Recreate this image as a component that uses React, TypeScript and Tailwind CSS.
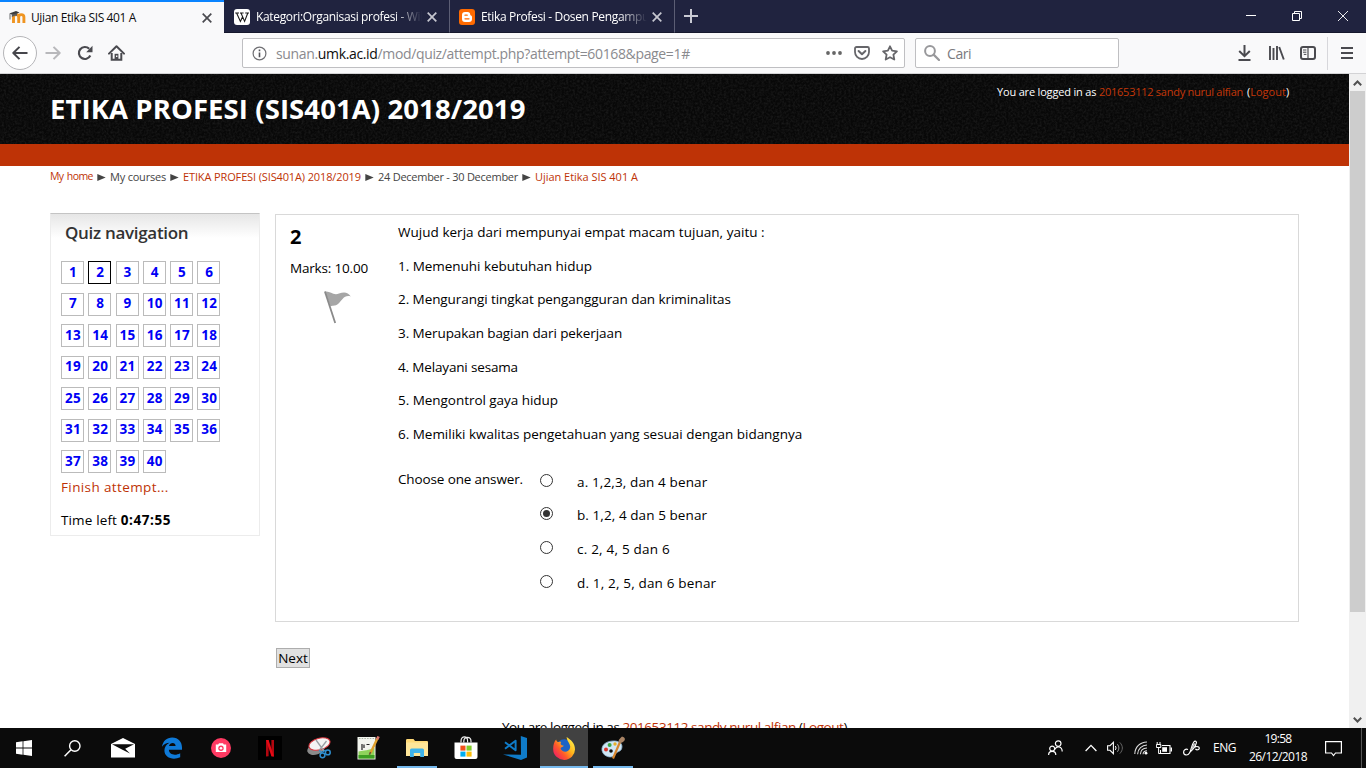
import React from "react";

const LINK = "text-[#be3306]";

function Tabs() {
  return (
    <div className="flex h-[33px] shrink-0 bg-[#20233f] font-['Open_Sans',sans-serif] text-[12px] text-white">
      <div className="flex h-[33px] w-[224px] items-center border-t-2 border-[#0a84ff] bg-[#f9f9fa] pl-[9px] text-[#0c0c0d]">
        <svg width="17" height="16" viewBox="0 0 17 16" className="shrink-0">
          <path d="M4.5 13V7C4.5 3.8 9.7 3.8 9.7 7V13M9.7 7C9.7 3.8 14.9 3.8 14.9 7V13" fill="none" stroke="#ef9421" strokeWidth="2.9" />
          <path d="M0.3 3.4L7 1L10.5 2.6L4.5 5.2Z" fill="#3c3c3c" />
          <path d="M2.8 4.2V7.2C4.3 5.8 6.3 5.4 8 5.8V3.6Z" fill="#58595b" />
          <path d="M1 3.8V9.5" stroke="#58595b" strokeWidth="0.9" />
        </svg>
        <span className="ml-[5px] w-[171px] whitespace-nowrap tracking-[-0.38px]">Ujian Etika SIS 401 A</span>
        <TabClose className="text-[#4a4a4f]" />
      </div>
      <div className="flex h-[33px] w-[226px] items-center border-b border-r border-b-[#15172c] border-r-[#5c5e74] pl-[10px] pt-[2px]">
        <svg width="16" height="16" viewBox="0 0 16 16" className="shrink-0">
          <rect width="16" height="16" rx="3" fill="#fff" />
          <path d="M1.2 4H5M6 4H9.6M11.2 4H15M2.6 4L6.4 12.4L8.6 7.8M7 4L10.6 12.4L13.8 4" fill="none" stroke="#1a1a1a" strokeWidth="1.1" />
        </svg>
        <span className="ml-[6px] w-[168px] overflow-hidden whitespace-nowrap tracking-[-0.34px] [mask-image:linear-gradient(to_right,black_138px,transparent_166px)]">
          Kategori:Organisasi profesi - Wikipedia
        </span>
        <TabClose className="ml-[3px] text-[#c6c7d0]" />
      </div>
      <div className="flex h-[33px] w-[225px] items-center border-b border-r border-b-[#15172c] border-r-[#5c5e74] pl-[9px] pt-[2px]">
        <svg width="16" height="16" viewBox="0 0 16 16" className="shrink-0">
          <rect width="16" height="16" rx="3" fill="#ff6a00" />
          <path d="M6 3H8.6A2.6 2.6 0 0 1 11.2 5.6C11.2 6.8 13 6.4 13 7.8V10A3 3 0 0 1 10 13H6A3 3 0 0 1 3 10V6A3 3 0 0 1 6 3Z" fill="#fff" />
          <path d="M6 6.2H8.2M6 9.8H10" stroke="#ff6a00" strokeWidth="1.3" strokeLinecap="round" />
        </svg>
        <span className="ml-[6px] w-[166px] overflow-hidden whitespace-nowrap tracking-[-0.34px] [mask-image:linear-gradient(to_right,black_138px,transparent_166px)]">
          Etika Profesi - Dosen Pengampu : Drs
        </span>
        <TabClose className="ml-[5px] text-[#c6c7d0]" />
      </div>
      <div className="flex grow items-center border-b border-[#15172c] pl-[9px]">
        <svg width="14" height="14" viewBox="0 0 14 14">
          <path d="M7 0V14M0 7H14" stroke="#c9cad3" strokeWidth="2" />
        </svg>
      </div>
      <div className="flex w-[120px] items-center gap-[36px] border-b border-[#15172c]">
        <svg width="10" height="10" viewBox="0 0 10 10"><path d="M0 4.5H10" stroke="#fff" /></svg>
        <svg width="10" height="10" viewBox="0 0 10 10"><path d="M0.5 2.5H7.5V9.5H0.5ZM2.5 2.5V0.5H9.5V7.5H7.5" fill="none" stroke="#fff" /></svg>
        <svg width="10" height="10" viewBox="0 0 10 10"><path d="M0 0L10 10M10 0L0 10" stroke="#fff" strokeWidth="0.9" /></svg>
      </div>
    </div>
  );
}

function TabClose({ className }: { className: string }) {
  return (
    <svg width="10" height="10" viewBox="0 0 10 10" className={"shrink-0 " + className}>
      <path d="M0.7 0.7L9.3 9.3M9.3 0.7L0.7 9.3" stroke="currentColor" strokeWidth="1.7" />
    </svg>
  );
}

function NavBar() {
  return (
    <div className="flex h-[41px] shrink-0 items-center border-b border-[#d3d3d5] bg-[#f9f9fa] text-[#4a4a4f]">
      <div className="ml-[3px] flex h-[34px] w-[34px] items-center justify-center rounded-full border border-[#b5b5b8] bg-white">
        <svg width="16" height="14" viewBox="0 0 16 14"><path d="M1.2 7H15.5M7.5 0.9L1.3 7L7.5 13.1" fill="none" stroke="#46464b" strokeWidth="2" strokeLinejoin="round" /></svg>
      </div>
      <svg className="ml-[8px]" width="16" height="14" viewBox="0 0 16 14"><path d="M0.5 7H14.8M8.5 0.9L14.7 7L8.5 13.1" fill="none" stroke="#b8b8bb" strokeWidth="2" strokeLinejoin="round" /></svg>
      <svg className="ml-[16px]" width="16" height="16" viewBox="0 0 16 16">
        <path d="M13.3 10.6A6 6 0 1 1 12.2 3.8" fill="none" stroke="currentColor" strokeWidth="2.2" />
        <path d="M15.5 0.8V7.2H9.2Z" fill="currentColor" />
      </svg>
      <svg className="ml-[15px]" width="17" height="16" viewBox="0 0 17 16">
        <path d="M1 8.6L8.5 1.3L16 8.6" fill="none" stroke="currentColor" strokeWidth="2" strokeLinejoin="round" strokeLinecap="round" />
        <path d="M3.7 8V14.8H13.3V8" fill="none" stroke="currentColor" strokeWidth="2" />
        <path d="M6.6 15V8.8H10.4V15Z" fill="currentColor" />
        <path d="M8 10.5h1.4v1.5H8z" fill="#f9f9fa" />
      </svg>

      <div className="ml-[117px] flex h-[30px] w-[663px] items-center rounded-[2px] border border-[#bfbfc2] bg-white">
        <svg className="ml-[9px]" width="15" height="15" viewBox="0 0 15 15">
          <circle cx="7.5" cy="7.5" r="6.4" fill="none" stroke="#6f6f73" strokeWidth="1.2" />
          <path d="M7.5 6.6V11.2M7.5 3.6V5.2" stroke="#55555a" strokeWidth="1.6" />
        </svg>
        <div className="ml-[9px] w-[548px] whitespace-nowrap font-['Open_Sans',sans-serif] text-[14px] tracking-[-0.35px] text-[#8a8a8e]">
          sunan.<span className="text-[#0c0c0d]">umk.ac.id</span>/mod/quiz/attempt.php?attempt=60168&amp;page=1#
        </div>
        <svg width="18" height="4" viewBox="0 0 18 4" className="ml-px">
          <circle cx="3" cy="2" r="1.9" fill="#666" /><circle cx="9" cy="2" r="1.9" fill="#666" /><circle cx="15" cy="2" r="1.9" fill="#666" />
        </svg>
        <svg className="ml-[11px]" width="16" height="14" viewBox="0 0 16 14">
          <path d="M2.5 1H13.5A1.5 1.5 0 0 1 15 2.5V6A7 7 0 0 1 1 6V2.5A1.5 1.5 0 0 1 2.5 1Z" fill="none" stroke="#66666a" strokeWidth="1.8" />
          <path d="M4.6 5L8 8.3L11.4 5" fill="none" stroke="#66666a" strokeWidth="2" strokeLinecap="round" strokeLinejoin="round" />
        </svg>
        <svg className="ml-[12px]" width="16" height="16" viewBox="0 0 16 16">
          <path d="M8 1.3L10.1 5.7L14.9 6.3L11.4 9.7L12.3 14.5L8 12.2L3.7 14.5L4.6 9.7L1.1 6.3L5.9 5.7Z" fill="none" stroke="#66666a" strokeWidth="1.8" strokeLinejoin="round" />
        </svg>
      </div>

      <div className="ml-[10px] flex h-[30px] w-[204px] items-center rounded-[2px] border border-[#bfbfc2] bg-white">
        <svg className="ml-[8px]" width="16" height="16" viewBox="0 0 16 16">
          <circle cx="6" cy="6" r="4.9" fill="none" stroke="#98989b" strokeWidth="2" />
          <path d="M9.6 9.6L15 15" stroke="#98989b" strokeWidth="2.2" strokeLinecap="round" />
        </svg>
        <span className="ml-[7px] font-['Open_Sans',sans-serif] text-[14px] tracking-[-0.4px] text-[#7a7a7e]">Cari</span>
      </div>

      <svg className="ml-[119px]" width="13" height="16" viewBox="0 0 13 16">
        <path d="M6.5 0V11M1.2 6L6.5 11.2L11.8 6M0.5 15H12.5" fill="none" stroke="currentColor" strokeWidth="2" />
      </svg>
      <svg className="ml-[18px]" width="16" height="14" viewBox="0 0 16 14">
        <path d="M1 0V14M4.5 2V14M8 0V14M10.2 1L14.8 13.5" fill="none" stroke="currentColor" strokeWidth="1.9" />
      </svg>
      <svg className="ml-[15px]" width="16" height="14" viewBox="0 0 16 14">
        <rect x="1" y="1" width="14" height="12" rx="2" fill="none" stroke="currentColor" strokeWidth="2" />
        <path d="M8 1V13" stroke="currentColor" strokeWidth="1.2" />
        <path d="M3 4H6.4M3 6.2H6.4M3.8 8.4H6.4" stroke="currentColor" strokeWidth="1" />
      </svg>
      <div className="ml-[11px] h-[33px] w-px bg-[#d7d7db]" />
      <svg className="ml-[13px]" width="12" height="12" viewBox="0 0 12 12">
        <path d="M0 1H12M0 6H12M0 11H12" stroke="currentColor" strokeWidth="2" />
      </svg>
    </div>
  );
}

function Noise() {
  return (
    <svg className="absolute inset-0 h-full w-full">
      <filter id="leather" x="0" y="0" width="100%" height="100%">
        <feTurbulence type="fractalNoise" baseFrequency="0.45" numOctaves="2" seed="4" />
        <feColorMatrix values="0 0 0 0 1  0 0 0 0 1  0 0 0 0 1  0.2 0 0 0 -0.07" />
      </filter>
      <rect width="100%" height="100%" filter="url(#leather)" opacity="0.7" />
    </svg>
  );
}

function Sep() {
  return (
    <svg width="9" height="7" viewBox="0 0 9 7" className="mx-[4px] mt-px shrink-0">
      <path d="M0.3 0L8.7 3.5L0.3 7Z" fill="#444" />
    </svg>
  );
}

const statements = [
  { text: "Wujud kerja dari mempunyai empat macam tujuan, yaitu :", track: "tracking-[0.03px]" },
  { text: "1. Memenuhi kebutuhan hidup", track: "tracking-[-0.03px]" },
  { text: "2. Mengurangi tingkat pengangguran dan kriminalitas", track: "tracking-[-0.07px]" },
  { text: "3. Merupakan bagian dari pekerjaan", track: "tracking-[-0.09px]" },
  { text: "4. Melayani sesama", track: "tracking-[-0.16px]" },
  { text: "5. Mengontrol gaya hidup", track: "tracking-[-0.04px]" },
  { text: "6. Memiliki kwalitas pengetahuan yang sesuai dengan bidangnya", track: "tracking-[-0.02px]" },
];

const answers = [
  { text: "a. 1,2,3, dan 4 benar", checked: false, track: "tracking-[0.13px]" },
  { text: "b. 1,2, 4 dan 5 benar", checked: true, track: "tracking-[0.08px]" },
  { text: "c. 2, 4, 5 dan 6", checked: false, track: "tracking-[0.22px]" },
  { text: "d. 1, 2, 5, dan 6 benar", checked: false, track: "tracking-[0.17px]" },
];

function QuizNavigation() {
  return (
    <div className="h-[323px] w-[210px] shrink-0 border border-[#ececec] border-t-[#c4c4c4] bg-[linear-gradient(to_bottom,#e6e6e6,#ffffff_24px)] pl-[10px]">
      <h2 className="mt-[7px] pl-[4px] text-[17px] font-semibold leading-[24px] tracking-[-0.3px] text-[#333]">Quiz navigation</h2>
      <div className="mt-[16px] grid w-[163.5px] grid-cols-6 gap-y-[8.5px]">
        {Array.from({ length: 40 }, (_, i) => i + 1).map((n) => (
          <div
            key={n}
            className={
              "flex h-[23px] w-[23px] items-center justify-center border bg-white pl-px text-[13.5px] font-bold leading-none tracking-[0.25px] text-[#0000f5] " +
              (n === 2 ? "border-black" : "border-[#bbb]")
            }
          >
            {n}
          </div>
        ))}
      </div>
      <div className={"mt-[4px] text-[13.5px] leading-[20px] tracking-[0.38px] " + LINK}>Finish attempt...</div>
      <div className="mt-[13px] text-[13.5px] leading-[20px]">
        <span className="tracking-[0.14px]">Time left </span>
        <b className="tracking-[0.6px]">0:47:55</b>
      </div>
    </div>
  );
}

function Question() {
  return (
    <div className="flex h-[408px] w-[1024px] border border-[#d9d9d9] text-[13.5px]">
      <div className="w-[122px] pl-[14px]">
        <div className="mt-[8px] text-[20px] font-bold leading-[28px]">2</div>
        <div className="mt-[7px] leading-[20px] tracking-[-0.18px]">Marks: 10.00</div>
        <svg className="ml-[34px] mt-[13px]" width="28" height="33" viewBox="0 0 28 33">
          <path d="M1 0.6C6 -0.6 9 5 15 2.5C20 0.5 24 1 26.8 5.4C20 3.5 18.5 9 14 13C11 15.4 9 14 6.5 15.5Z" fill="#a6a6a6" />
          <path d="M0.9 0.5L11.2 32" stroke="#8a8a8a" strokeWidth="1.8" />
        </svg>
      </div>
      <div className="pt-[7px]">
        {statements.map((s) => (
          <p key={s.text} className={"mb-[13.65px] whitespace-nowrap leading-[20px] " + s.track}>{s.text}</p>
        ))}
        <div className="mt-[25px] flex">
          <div className="w-[142px] leading-[20px] tracking-[-0.13px]">Choose one answer.</div>
          <div className="mt-[3px] flex flex-col gap-[13.6px]">
            {answers.map((a) => (
              <label key={a.text} className="flex h-[20px] items-center">
                <span className="mb-[3px] flex h-[13px] w-[13px] shrink-0 items-center justify-center rounded-full border border-[#333] bg-white">
                  {a.checked && <span className="h-[7px] w-[7px] rounded-full bg-[#333]" />}
                </span>
                <span className={"ml-[24px] whitespace-nowrap leading-[20px] " + a.track}>{a.text}</span>
              </label>
            ))}
          </div>
        </div>
      </div>
    </div>
  );
}

function Page() {
  return (
    <div className="flex h-[654px] shrink-0">
      <div className="flex w-[1349px] flex-col overflow-hidden bg-white font-['Open_Sans',sans-serif] text-black">
        <header className="relative flex h-[70px] shrink-0 justify-between bg-[#080808] pl-[50px] pr-[60px]">
          <Noise />
          <h1 className="relative mt-[16px] whitespace-nowrap text-[27.5px] font-bold leading-[38px] tracking-[0.09px] text-white">ETIKA PROFESI (SIS401A) 2018/2019</h1>
          <div className="relative mt-[10px] flex whitespace-pre text-[11px] leading-[16px] text-white">
            <span className="w-[102px] tracking-[-0.18px]">You are logged in as </span>
            <span className="w-[148px] tracking-[-0.26px] text-[#c43708]">201653112 sandy nurul alfian</span>
            <span className="w-[42px]">(<span className="text-[#c43708]">Logout</span>)</span>
          </div>
        </header>
        <div className="h-[22px] shrink-0 bg-[#be3306]" />
        <nav className="flex h-[22px] shrink-0 items-center whitespace-nowrap pl-[50px] text-[11px] text-[#444]">
          <span className={"w-[43px] text-[10.5px] tracking-[-0.6px] [word-spacing:1.2px] " + LINK}>My home</span><Sep />
          <span className="w-[56px] tracking-[-0.21px]">My courses</span><Sep />
          <span className={"w-[178px] tracking-[-0.13px] " + LINK}>ETIKA PROFESI (SIS401A) 2018/2019</span><Sep />
          <span className="w-[140px] tracking-[-0.26px]">24 December - 30 December</span><Sep />
          <span className={"tracking-[-0.03px] " + LINK}>Ujian Etika SIS 401 A</span>
        </nav>
        <main className="mt-[25px] flex shrink-0 gap-[15px] pl-[50px]">
          <QuizNavigation />
          <div className="pt-px">
            <Question />
            <button className="ml-px mt-[26px] flex h-[20px] w-[34px] items-center justify-center border border-[#adadad] bg-[#e1e1e1] pt-px text-[13.5px] leading-none">Next</button>
          </div>
        </main>
        <footer className="mt-[49px] shrink-0 whitespace-nowrap pl-[502px] text-[13.5px] leading-[20px] tracking-[-0.44px]">
          You are logged in as <span className={LINK}>201653112 sandy nurul alfian</span> (<span className={LINK}>Logout</span>)
        </footer>
      </div>
      <div className="flex w-[17px] flex-col items-center bg-[#f0f0f0]">
        <div className="flex h-[17px] items-center"><svg width="9" height="6" viewBox="0 0 9 6"><path d="M0.8 5.2L4.5 1.5L8.2 5.2" fill="none" stroke="#505050" strokeWidth="2" /></svg></div>
        <div className="h-[521px] w-[15px] bg-[#cdcdcd]" />
        <div className="mt-auto flex h-[17px] items-center"><svg width="9" height="6" viewBox="0 0 9 6"><path d="M0.8 0.8L4.5 4.5L8.2 0.8" fill="none" stroke="#505050" strokeWidth="2" /></svg></div>
      </div>
    </div>
  );
}

function Cell({ children, running, active, className = "" }: { children: React.ReactNode; running?: boolean; active?: boolean; className?: string }) {
  return (
    <div className={"flex h-[40px] w-[48px] shrink-0 flex-col items-center " + (active ? "bg-[#414141] " : "") + className}>
      <div className="flex h-[38px] items-center pt-[2px]">{children}</div>
      {(running || active) && <div className={"h-[2px] bg-[#76b9ed] " + (active ? "w-[48px]" : "w-[40px]")} />}
    </div>
  );
}

function Taskbar() {
  return (
    <div className="flex h-[40px] shrink-0 bg-[#0b0b0b] text-white">
      <Cell>
        <svg width="16" height="16" viewBox="0 0 16 16"><path d="M0 2.2L6.6 1.3V7.6H0ZM7.4 1.2L16 0V7.6H7.4ZM0 8.4H6.6V14.7L0 13.8ZM7.4 8.4H16V16L7.4 14.8Z" fill="#fff" /></svg>
      </Cell>
      <Cell>
        <svg width="17" height="17" viewBox="0 0 17 17"><circle cx="10.8" cy="6" r="5.2" fill="none" stroke="#fff" strokeWidth="1.4" /><path d="M7 9.8L0.6 16.3" stroke="#fff" strokeWidth="1.5" /></svg>
      </Cell>
      <Cell className="ml-[3px]">
        <svg width="24" height="20" viewBox="0 0 24 20"><path d="M0 6L12 0L24 6V19.5H0Z" fill="#fff" /><path d="M1 6.2H23L14.2 10.8L19 15.5L10.5 11.2Z" fill="#0b0b0b" /></svg>
      </Cell>
      <Cell className="ml-px">
        <svg width="20" height="22" viewBox="0 0 20 22"><path d="M0 9.8C0.8 4 4.8 0.5 10.2 0.5C16.4 0.5 20 5 20 10.5V12.8H6.9C7.1 18.2 13.8 18.8 18.2 16.2V20.3C11.2 23.5 2.4 21 2.4 13.6C2.4 9.8 4.6 7.2 7.6 5.7C4.7 5.7 1.8 7.2 0 9.8ZM7 9H13.6C13.7 4.8 7.8 5 7 9Z" fill="#0f7ad8" /></svg>
      </Cell>
      <Cell className="ml-px">
        <svg width="20" height="20" viewBox="0 0 20 20"><circle cx="10" cy="10" r="10" fill="#ff3a63" /><path d="M4.8 6.5H7.2L8 5.3H12L12.8 6.5H15.2V14H4.8Z" fill="#fff" /><circle cx="10" cy="10.2" r="2.7" fill="#ff3a63" /><circle cx="10" cy="10.2" r="1.3" fill="#fff" /></svg>
      </Cell>
      <Cell className="ml-px">
        <svg width="24" height="24" viewBox="0 0 24 24"><rect width="24" height="24" fill="#000" /><path d="M8 4H10.6V20.2L8 20.5ZM13.4 4H16V20.5L13.4 20.2Z" fill="#b1060f" /><path d="M8 4H10.6L16 20.5L13.4 20.2Z" fill="#e50914" /></svg>
      </Cell>
      <Cell className="ml-px">
        <svg width="24" height="22" viewBox="0 0 24 22">
          <ellipse cx="9" cy="12" rx="9" ry="5.5" transform="rotate(-18 9 12)" fill="#8a8a8a" />
          <ellipse cx="12.5" cy="7" rx="10.8" ry="5.8" transform="rotate(-15 12.5 7)" fill="#f4f4f4" stroke="#d9363e" strokeWidth="1" />
          <path d="M9 3L17 14M19.5 4L12.5 13" stroke="#9a9fa4" strokeWidth="1.3" />
          <circle cx="15.5" cy="18.3" r="2.4" fill="none" stroke="#2f8fd0" strokeWidth="1.5" /><circle cx="20.8" cy="15.4" r="2.4" fill="none" stroke="#2f8fd0" strokeWidth="1.5" />
          <path d="M12 13.5L15 15.5L18.5 13" fill="none" stroke="#2f8fd0" strokeWidth="1.3" />
        </svg>
      </Cell>
      <Cell className="ml-px">
        <svg width="24" height="24" viewBox="0 0 24 24">
          <path d="M1.5 1H19.5V23.5H1.5Z" fill="#f2f5ee" /><path d="M2.5 15.5C8 14.5 13 14 18.5 12V22.5H2.5Z" fill="#8fd35c" /><path d="M2.5 19H18.5V22.5H2.5Z" fill="#3c9e22" />
          <path d="M6 8V14M8 8.5V12M10.5 8.5H13.5" stroke="#222" strokeWidth="1.2" /><path d="M3 2.5H18" stroke="#a8b1a4" strokeDasharray="1.5 1.2" />
          <path d="M21.5 2.2L14.5 17" stroke="#e0a02c" strokeWidth="2.4" /><path d="M22.6 0.5L21.1 3.4" stroke="#d9756c" strokeWidth="2.6" /><path d="M14.6 16L13.4 18.8" stroke="#6b5836" strokeWidth="1.6" />
        </svg>
      </Cell>
      <Cell running className="ml-px">
        <svg width="22" height="18" viewBox="0 0 22 18"><path d="M0 1.2A1.2 1.2 0 0 1 1.2 0H7.5L9 2H21A1 1 0 0 1 22 3V17H0Z" fill="#ffd977" /><path d="M0 3.5H22V17H0Z" fill="#ffe699" /><path d="M4 18V11A1.5 1.5 0 0 1 5.5 9.5H16.5A1.5 1.5 0 0 1 18 11V18H14.2V14H7.8V18Z" fill="#3fb3ea" /></svg>
      </Cell>
      <Cell className="ml-px">
        <svg width="24" height="24" viewBox="0 0 24 24"><path d="M0.5 6.5H23.5V21A2 2 0 0 1 21.5 23H2.5A2 2 0 0 1 0.5 21Z" fill="#fff" /><path d="M7 6.5V5C7 -0.5 13.6 -0.5 13.6 5V6.5M9.8 6.5V5.2C9.8 0 17 0 17 5.2V6.5" fill="none" stroke="#eee" strokeWidth="1.2" /><path d="M6.4 9.6H11.5V14.6H6.4Z" fill="#f1511b" /><path d="M12.5 9.6H17.6V14.6H12.5Z" fill="#80cc28" /><path d="M6.4 15.6H11.5V20.6H6.4Z" fill="#00adef" /><path d="M12.5 15.6H17.6V20.6H12.5Z" fill="#fbbc09" /></svg>
      </Cell>
      <Cell className="ml-px">
        <svg width="24" height="24" viewBox="0 0 24 24"><path d="M17.8 0L24 2V21.6L18 24L0 18.4L18 18.8Z" fill="#0f7bc8" /><path d="M2 6.2L12.6 14.2V4.8L2 12.8" fill="none" stroke="#0f7bc8" strokeWidth="2" strokeLinejoin="round" /></svg>
      </Cell>
      <Cell active className="ml-px">
        <svg width="22" height="23" viewBox="0 0 22 23">
          <defs><linearGradient id="fox" x1="0.9" y1="0.1" x2="0.1" y2="0.8"><stop offset="0" stopColor="#fff04a" /><stop offset="0.4" stopColor="#ffb31a" /><stop offset="0.7" stopColor="#ff5a2a" /><stop offset="1" stopColor="#f0285a" /></linearGradient></defs>
          <circle cx="11.3" cy="10" r="7.8" fill="#1e63c4" />
          <path d="M13.6 0C17.5 2.6 22 6 22 12.2A10.9 10.6 0 0 1 0.2 12.4C0 8 1.2 4.2 3.2 2.4C3.2 3.8 4.4 5.1 5.6 5.1C6.5 4.6 7.5 4.6 8.2 5C7.2 6.4 7.6 7.4 8.8 8.2L10.8 8.8C10.2 10 8 10 7.6 11.5C8.5 15.6 16.5 16.4 17.2 10C17.3 6.6 14 4.5 13.6 0Z" fill="url(#fox)" />
        </svg>
      </Cell>
      <Cell running className="ml-px">
        <svg width="24" height="24" viewBox="0 0 24 24">
          <path d="M1 14.5C0 8 7 4.5 14 5C20 5.5 22 9 20.5 13C19.5 16 15 15.5 14 18.5C13 22.5 2.5 22 1 14.5Z" fill="#cfe6f5" stroke="#8db4cf" strokeWidth="0.8" />
          <circle cx="5" cy="13.5" r="2" fill="#d9342b" /><circle cx="8.6" cy="9" r="2" fill="#3aa648" /><circle cx="14" cy="8" r="1.7" fill="#e8b02a" /><circle cx="10" cy="15" r="1.8" fill="#0b0b0b" />
          <path d="M19 6L12 22.5" stroke="#d8862e" strokeWidth="2.2" /><path d="M18 6.8C16.5 3.5 19.5 2.5 21 0.5C23.5 1 24.5 2.5 23.5 4.5C22 6 20.5 7.5 18 6.8Z" fill="#a98465" />
        </svg>
      </Cell>

      <div className="ml-auto flex items-center font-['Open_Sans',sans-serif] text-[12px] leading-[18px]">
        <svg width="15" height="16" viewBox="0 0 15 16"><g fill="none" stroke="#fff" strokeWidth="1.2"><circle cx="10.2" cy="3.6" r="2.8" /><circle cx="4.2" cy="8.6" r="2.5" /><path d="M0.6 15C0.6 10.2 7.8 10.2 7.8 15M7 9.2C8.5 5.6 14.2 6.2 14.2 11.5" /></g></svg>
        <svg className="ml-[22px]" width="12" height="8" viewBox="0 0 12 8"><path d="M0.6 7L6 1.4L11.4 7" fill="none" stroke="#fff" strokeWidth="1.3" /></svg>
        <svg className="ml-[10px]" width="17" height="14" viewBox="0 0 17 14"><path d="M0.6 4.7H3L6.4 1.3V12.7L3 9.3H0.6Z" fill="none" stroke="#fff" strokeWidth="1.1" /><path d="M8.3 5C9.2 6.2 9.2 7.8 8.3 9" fill="none" stroke="#fff" /><path d="M10.4 3.2C12.4 5.6 12.4 8.4 10.4 10.8" fill="none" stroke="#999" /><path d="M12.8 1.4C16.2 5 16.2 9 12.8 12.6" fill="none" stroke="#666" /></svg>
        <svg className="ml-[10px]" width="14" height="14" viewBox="0 0 14 14"><g fill="none" stroke="#ddd" strokeWidth="1.1"><path d="M0.8 13C1 6 6 1.2 13 1" /><path d="M3.6 13.2C3.8 8 8 4.2 13 4" /><path d="M6.4 13.2C6.6 9.6 9.4 7.2 13 7" /><path d="M9 13.2C9.2 11.4 11 9.8 13 9.8" /></g><circle cx="12" cy="12.2" r="1.4" fill="#fff" /></svg>
        <svg className="ml-[8px]" width="16" height="13" viewBox="0 0 16 13"><path d="M6 3.5H14V11.5H4.5V8" fill="none" stroke="#fff" strokeWidth="1.1" /><path d="M6.2 5.2H11V9.8H6.2Z" fill="#fff" /><path d="M14.6 5.5H16V9.5H14.6Z" fill="#fff" /><path d="M1.2 0V2.5M4 0V2.5M0.4 2.5H4.8V5.5H0.4ZM2.6 5.5V11.5H4.5" fill="none" stroke="#fff" /></svg>
        <svg className="ml-[11px]" width="17" height="16" viewBox="0 0 17 16"><path d="M5 9.5C2.5 8.5 0.6 10 0.6 12.2C0.6 15.5 4.8 16 6.5 13C8.5 9.5 8.5 5 10.8 2C12 0.4 14 1 13.2 3.4C12.4 6.5 9.5 10 6.8 12.2M9.5 9.2C11.5 5.6 16.8 5.8 16.2 8.6C15.8 10.2 13.5 10 12.4 9" fill="none" stroke="#fff" strokeWidth="1.2" /><path d="M8.8 9L11.6 3.4" stroke="#ccc" strokeWidth="1.6" /></svg>
        <span className="ml-[13px] w-[24px] tracking-[-0.48px]">ENG</span>
        <div className="ml-[10px] flex w-[62px] flex-col items-center whitespace-nowrap">
          <span className="tracking-[-0.7px]">19:58</span>
          <span className="tracking-[-0.57px]">26/12/2018</span>
        </div>
        <svg className="ml-[16px] mt-px" width="17" height="16" viewBox="0 0 17 16"><path d="M0.6 0.6H16.4V12H10.5L8.5 14.6L6.5 12H0.6Z" fill="none" stroke="#fff" strokeWidth="1.2" /></svg>
        <div className="ml-[19px] h-[40px] w-px bg-[#555]" />
        <div className="w-[4px]" />
      </div>
    </div>
  );
}

export default function App() {
  return (
    <div className="flex h-[768px] w-[1366px] flex-col overflow-hidden bg-white">
      <Tabs />
      <NavBar />
      <Page />
      <Taskbar />
    </div>
  );
}
